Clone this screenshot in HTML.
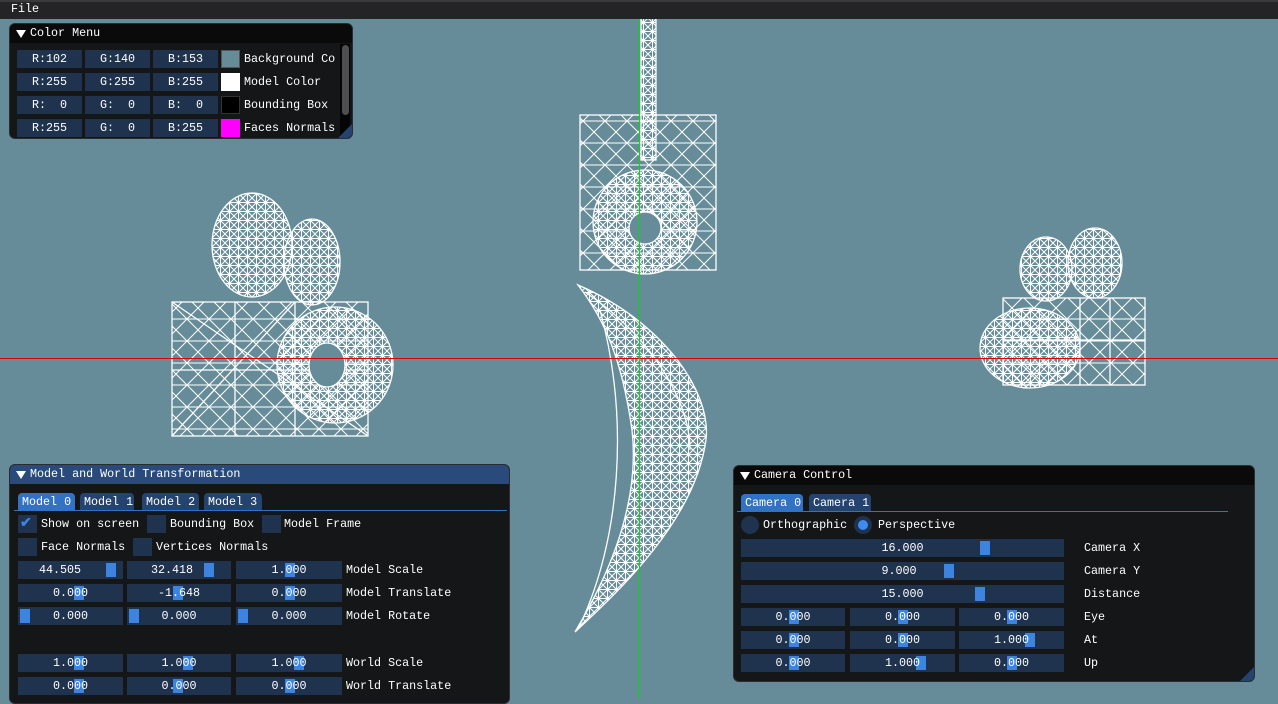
<!DOCTYPE html>
<html><head><meta charset="utf-8"><style>
*{margin:0;padding:0;box-sizing:border-box}
body{width:1278px;height:698px;overflow:hidden;background:#668c99;position:relative;font-family:"Liberation Mono",monospace;font-size:11.7px;color:#fff}
.a{position:absolute}
.t{position:absolute;white-space:pre;line-height:18px}
.win{position:absolute;background:#151617;border:1px solid #2b2b30;border-radius:6px;overflow:hidden}
.tb{position:absolute;left:0;right:0;top:0;height:19px;line-height:19px;padding-left:20px;white-space:pre}
.tb:before{content:"";position:absolute;left:6px;top:6px;border-left:5px solid transparent;border-right:5px solid transparent;border-top:8px solid #fff}
.f{position:absolute;background:#1f324e;height:18px;line-height:18px;text-align:center;white-space:pre}
.f span{position:relative}
.g{position:absolute;top:2px;width:10px;height:14px;background:#3d84e0}
.tab{position:absolute;height:18px;line-height:18px;background:#24446f;border-radius:4px 4px 0 0;padding-left:4px;white-space:pre}
.tab.on{background:#3272c4}
.cb{position:absolute;width:19px;height:18px;background:#1f324e}
.grip{position:absolute;right:0;bottom:0;width:0;height:0;border-left:14px solid transparent;border-bottom:14px solid #24446f}
</style></head><body>
<svg class="a" style="left:0;top:0" width="1278" height="698">
<defs>
<pattern id="p" width="9" height="9" patternUnits="userSpaceOnUse"><path d="M0 0L9 9M9 0L0 9M0 4.5H9M4.5 0V9" stroke="#fff" stroke-width="1" fill="none"/></pattern>
<pattern id="q" width="22" height="22" patternUnits="userSpaceOnUse"><path d="M0 0L22 22M22 0L0 22M0 11H22" stroke="#fff" stroke-width="1" fill="none"/></pattern>
</defs>
<g stroke="#fff" stroke-width="1.3">
<rect x="172" y="302" width="196" height="134" fill="url(#q)"/>
<path d="M172 370H368M235 302V436M295 302V436M172 302L368 436M172 436L295 302" fill="none"/>
<ellipse cx="252" cy="245" rx="40" ry="52" fill="url(#p)"/>
<ellipse cx="312" cy="262" rx="28" ry="43" fill="url(#p)"/>
<circle cx="335" cy="365" r="58" fill="url(#p)"/>
<ellipse cx="327" cy="365" rx="18" ry="22" fill="#668c99"/>
<rect x="641" y="18" width="15" height="142" fill="url(#p)"/>
<rect x="580" y="115" width="136" height="155" fill="url(#q)"/>
<circle cx="645" cy="222" r="52" fill="url(#p)"/>
<circle cx="645" cy="228" r="16" fill="#668c99"/>
<path d="M578 285C660 320 712 390 706 440C695 520 620 590 575 632C612 570 640 500 632 430C622 360 605 320 578 285Z" fill="url(#p)"/>
<path d="M585 292C650 335 690 400 690 450M600 310C630 420 620 540 580 625" fill="none"/>
<rect x="1003" y="298" width="142" height="87" fill="url(#q)"/>
<path d="M1003 340H1145M1080 298V385M1110 298V385" fill="none"/>
<ellipse cx="1046" cy="269" rx="26" ry="32" fill="url(#p)"/>
<ellipse cx="1095" cy="263" rx="27" ry="35" fill="url(#p)"/>
<ellipse cx="1030" cy="348" rx="50" ry="40" fill="url(#p)"/>
</g>
<rect x="0" y="358" width="1278" height="1" fill="#e00000"/>
<rect x="639" y="18" width="1" height="680" fill="#00e000"/>
</svg>

<div class="a" style="left:0;top:0;width:1278px;height:19px;background:#242426;border-top:2px solid #3a3a3a"></div>
<div class="t" style="left:11px;top:0">File</div>

<div class="win" style="left:9px;top:23px;width:344px;height:116px">
<div class="tb" style="background:#0a0a0a">Color Menu</div>
<div class="f" style="left:7px;top:26px;width:65px">R:102</div><div class="f" style="left:75px;top:26px;width:65px">G:140</div><div class="f" style="left:143px;top:26px;width:65px">B:153</div>
<div class="a" style="left:211px;top:26px;width:19px;height:18px;background:#668c99;border:1px solid #555"></div><div class="t" style="left:234px;top:26px">Background Co</div>
<div class="f" style="left:7px;top:49px;width:65px">R:255</div><div class="f" style="left:75px;top:49px;width:65px">G:255</div><div class="f" style="left:143px;top:49px;width:65px">B:255</div>
<div class="a" style="left:211px;top:49px;width:19px;height:18px;background:#fff"></div><div class="t" style="left:234px;top:49px">Model Color</div>
<div class="f" style="left:7px;top:72px;width:65px">R:  0</div><div class="f" style="left:75px;top:72px;width:65px">G:  0</div><div class="f" style="left:143px;top:72px;width:65px">B:  0</div>
<div class="a" style="left:211px;top:72px;width:19px;height:18px;background:#000;border:1px solid #333"></div><div class="t" style="left:234px;top:72px">Bounding Box</div>
<div class="f" style="left:7px;top:95px;width:65px">R:255</div><div class="f" style="left:75px;top:95px;width:65px">G:  0</div><div class="f" style="left:143px;top:95px;width:65px">B:255</div>
<div class="a" style="left:211px;top:95px;width:19px;height:18px;background:#f0f"></div><div class="t" style="left:234px;top:95px">Faces Normals</div>
<div class="a" style="left:330px;top:20px;width:10px;height:96px;background:#050505"></div>
<div class="a" style="left:332px;top:21px;width:7px;height:70px;background:#4f4f4f;border-radius:4px"></div>
<div class="grip"></div>
</div>

<div class="win" style="left:9px;top:464px;width:501px;height:240px">
<div class="tb" style="background:#294a7a">Model and World Transformation</div>
<div class="tab on" style="left:8px;top:28px;width:57px">Model 0</div>
<div class="tab" style="left:70px;top:28px;width:54px">Model 1</div>
<div class="tab" style="left:132px;top:28px;width:57px">Model 2</div>
<div class="tab" style="left:194px;top:28px;width:58px">Model 3</div>
<div class="a" style="left:4px;top:45px;width:493px;height:1px;background:#3272c4"></div>
<div class="cb" style="left:8px;top:50px"></div><div class="t" style="left:10px;top:50px;color:#3d84e0;font-size:14px;font-weight:bold">✔</div><div class="t" style="left:31px;top:50px">Show on screen</div>
<div class="cb" style="left:137px;top:50px"></div><div class="t" style="left:160px;top:50px">Bounding Box</div>
<div class="cb" style="left:252px;top:50px"></div><div class="t" style="left:274px;top:50px">Model Frame</div>
<div class="cb" style="left:8px;top:73px"></div><div class="t" style="left:31px;top:73px">Face Normals</div>
<div class="cb" style="left:123px;top:73px"></div><div class="t" style="left:146px;top:73px">Vertices Normals</div>
<div class="f" style="left:8px;top:96px;width:105px"><div class="g" style="left:88px"></div><span>44.505   </span></div>
<div class="f" style="left:117px;top:96px;width:104px"><div class="g" style="left:77px"></div><span>32.418  </span></div>
<div class="f" style="left:226px;top:96px;width:106px"><div class="g" style="left:49px"></div><span>1.000</span></div>
<div class="t" style="left:336px;top:96px">Model Scale</div>
<div class="f" style="left:8px;top:119px;width:105px"><div class="g" style="left:56px"></div><span>0.000</span></div>
<div class="f" style="left:117px;top:119px;width:104px"><div class="g" style="left:46px"></div><span>-1.648</span></div>
<div class="f" style="left:226px;top:119px;width:106px"><div class="g" style="left:49px"></div><span>0.000</span></div>
<div class="t" style="left:336px;top:119px">Model Translate</div>
<div class="f" style="left:8px;top:142px;width:105px"><div class="g" style="left:2px"></div><span>0.000</span></div>
<div class="f" style="left:117px;top:142px;width:104px"><div class="g" style="left:2px"></div><span>0.000</span></div>
<div class="f" style="left:226px;top:142px;width:106px"><div class="g" style="left:2px"></div><span>0.000</span></div>
<div class="t" style="left:336px;top:142px">Model Rotate</div>
<div class="f" style="left:8px;top:189px;width:105px"><div class="g" style="left:56px"></div><span>1.000</span></div>
<div class="f" style="left:117px;top:189px;width:104px"><div class="g" style="left:56px"></div><span>1.000</span></div>
<div class="f" style="left:226px;top:189px;width:106px"><div class="g" style="left:58px"></div><span>1.000</span></div>
<div class="t" style="left:336px;top:189px">World Scale</div>
<div class="f" style="left:8px;top:212px;width:105px"><div class="g" style="left:56px"></div><span>0.000</span></div>
<div class="f" style="left:117px;top:212px;width:104px"><div class="g" style="left:46px"></div><span>0.000</span></div>
<div class="f" style="left:226px;top:212px;width:106px"><div class="g" style="left:49px"></div><span>0.000</span></div>
<div class="t" style="left:336px;top:212px">World Translate</div>
</div>

<div class="win" style="left:733px;top:465px;width:522px;height:217px">
<div class="tb" style="background:#0a0a0a">Camera Control</div>
<div class="tab on" style="left:7px;top:28px;width:62px">Camera 0</div>
<div class="tab" style="left:75px;top:28px;width:62px">Camera 1</div>
<div class="a" style="left:3px;top:45px;width:491px;height:1px;background:#3272c4"></div>
<div class="a" style="left:7px;top:50px;width:18px;height:18px;border-radius:50%;background:#1f324e"></div><div class="t" style="left:29px;top:50px">Orthographic</div>
<div class="a" style="left:120px;top:50px;width:18px;height:18px;border-radius:50%;background:#1f324e"></div><div class="a" style="left:124px;top:54px;width:10px;height:10px;border-radius:50%;background:#3d8cf0"></div><div class="t" style="left:144px;top:50px">Perspective</div>
<div class="f" style="left:7px;top:73px;width:323px"><div class="g" style="left:239px"></div><span>16.000</span></div><div class="t" style="left:350px;top:73px">Camera X</div>
<div class="f" style="left:7px;top:96px;width:323px"><div class="g" style="left:203px"></div><span>9.000 </span></div><div class="t" style="left:350px;top:96px">Camera Y</div>
<div class="f" style="left:7px;top:119px;width:323px"><div class="g" style="left:234px"></div><span>15.000</span></div><div class="t" style="left:350px;top:119px">Distance</div>
<div class="f" style="left:7px;top:142px;width:104px"><div class="g" style="left:48px"></div><span>0.000</span></div><div class="f" style="left:116px;top:142px;width:105px"><div class="g" style="left:48px"></div><span>0.000</span></div><div class="f" style="left:225px;top:142px;width:105px"><div class="g" style="left:48px"></div><span>0.000</span></div><div class="t" style="left:350px;top:142px">Eye</div>
<div class="f" style="left:7px;top:165px;width:104px"><div class="g" style="left:48px"></div><span>0.000</span></div><div class="f" style="left:116px;top:165px;width:105px"><div class="g" style="left:48px"></div><span>0.000</span></div><div class="f" style="left:225px;top:165px;width:105px"><div class="g" style="left:66px"></div><span>1.000</span></div><div class="t" style="left:350px;top:165px">At</div>
<div class="f" style="left:7px;top:188px;width:104px"><div class="g" style="left:48px"></div><span>0.000</span></div><div class="f" style="left:116px;top:188px;width:105px"><div class="g" style="left:66px"></div><span>1.000</span></div><div class="f" style="left:225px;top:188px;width:105px"><div class="g" style="left:48px"></div><span>0.000</span></div><div class="t" style="left:350px;top:188px">Up</div>
<div class="grip"></div>
</div>
</body></html>
